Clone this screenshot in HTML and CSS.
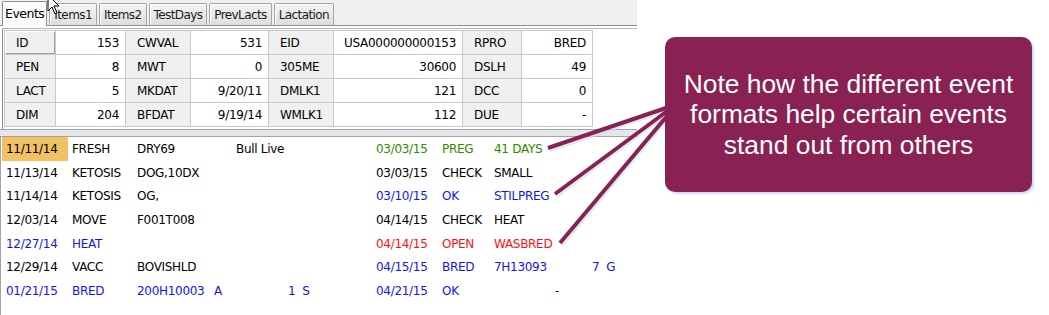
FILE: index.html
```html
<!DOCTYPE html>
<html lang="en">
<head>
    <meta charset="UTF-8">
    <title>Cow Events</title>
    <link rel="stylesheet" href="styles.css">
</head>
<body>
    <div class="app">
        <div class="tabs">
            <div class="tab active">Events</div>
            <div class="tab">Items1</div>
            <div class="tab">Items2</div>
            <div class="tab">TestDays</div>
            <div class="tab">PrevLacts</div>
            <div class="tab">Lactation</div>
        </div>

        <div class="summary">
            <table class="grid">
                <tr>
                    <td class="lbl sel">ID</td><td class="val">153</td>
                    <td class="lbl">CWVAL</td><td class="val">531</td>
                    <td class="lbl">EID</td><td class="val">USA000000000153</td>
                    <td class="lbl">RPRO</td><td class="val">BRED</td>
                </tr>
                <tr>
                    <td class="lbl">PEN</td><td class="val">8</td>
                    <td class="lbl">MWT</td><td class="val">0</td>
                    <td class="lbl">305ME</td><td class="val">30600</td>
                    <td class="lbl">DSLH</td><td class="val">49</td>
                </tr>
                <tr>
                    <td class="lbl">LACT</td><td class="val">5</td>
                    <td class="lbl">MKDAT</td><td class="val">9/20/11</td>
                    <td class="lbl">DMLK1</td><td class="val">121</td>
                    <td class="lbl">DCC</td><td class="val">0</td>
                </tr>
                <tr>
                    <td class="lbl">DIM</td><td class="val">204</td>
                    <td class="lbl">BFDAT</td><td class="val">9/19/14</td>
                    <td class="lbl">WMLK1</td><td class="val">112</td>
                    <td class="lbl">DUE</td><td class="val">-</td>
                </tr>
            </table>
        </div>

        <div class="splitter"></div>

        <div class="events">
            <div class="row">
                <span class="hl">11/11/14</span><span>FRESH</span><span>DRY69</span><span></span><span>Bull Live</span><span></span>
                <span class="green">03/03/15</span><span class="green">PREG</span><span class="green">41 DAYS</span><span></span><span></span>
            </div>
            <div class="row">
                <span>11/13/14</span><span>KETOSIS</span><span>DOG,10DX</span><span></span><span></span><span></span>
                <span>03/03/15</span><span>CHECK</span><span>SMALL</span><span></span><span></span>
            </div>
            <div class="row">
                <span>11/14/14</span><span>KETOSIS</span><span>OG,</span><span></span><span></span><span></span>
                <span class="blue">03/10/15</span><span class="blue">OK</span><span class="blue">STILPREG</span><span></span><span></span>
            </div>
            <div class="row">
                <span>12/03/14</span><span>MOVE</span><span>F001T008</span><span></span><span></span><span></span>
                <span>04/14/15</span><span>CHECK</span><span>HEAT</span><span></span><span></span>
            </div>
            <div class="row">
                <span class="blue">12/27/14</span><span class="blue">HEAT</span><span></span><span></span><span></span><span></span>
                <span class="red">04/14/15</span><span class="red">OPEN</span><span class="red">WASBRED</span><span></span><span></span>
            </div>
            <div class="row">
                <span>12/29/14</span><span>VACC</span><span>BOVISHLD</span><span></span><span></span><span></span>
                <span class="blue">04/15/15</span><span class="blue">BRED</span><span class="blue">7H13093</span><span></span><span class="blue">7&nbsp; G</span>
            </div>
            <div class="row">
                <span class="blue">01/21/15</span><span class="blue">BRED</span><span class="blue">200H10003</span><span class="blue">A</span><span></span><span class="blue">1&nbsp; S</span>
                <span class="blue">04/21/15</span><span class="blue">OK</span><span></span><span class="dark">-</span><span></span>
            </div>
        </div>
    </div>

    <!-- callout pointers drawn over the event list -->
    <svg class="pointers" width="1049" height="315" viewBox="0 0 1049 315">
        <g stroke="#c9e3f5" stroke-width="2" opacity="0.7">
            <line x1="667" y1="111" x2="550" y2="151" />
            <line x1="667" y1="115" x2="557" y2="197" />
            <line x1="668" y1="119" x2="562" y2="246" />
        </g>
        <g stroke="#892152" stroke-width="4">
            <line x1="666" y1="108" x2="548" y2="148" />
            <line x1="666" y1="112" x2="555" y2="194" />
            <line x1="667" y1="116" x2="560" y2="243" />
        </g>
    </svg>

    <div class="callout">
        <p>Note how the different event formats help certain events stand out from others</p>
    </div>

    <svg class="cursor" width="14" height="22" viewBox="0 0 14 22">
        <path d="M1 1 L1 17 L5 13 L8 20 L10 19 L7 12 L12 12 Z" fill="#fff" stroke="#000" stroke-width="1" stroke-linejoin="miter" />
    </svg>
</body>
</html>
```

FILE: styles.css
```css
:root {
    --ui-font: "DejaVu Sans", Verdana, sans-serif;
    --panel-bg: #f0f0f0;
    --cell-border: #c9c9c9;
    --callout: #892152;
    --ev-blue: #1414f0;
    --ev-green: #2f8a00;
    --ev-red: #ff1010;
}

* {
    margin: 0;
    padding: 0;
    box-sizing: border-box;
}

body {
    position: relative;
    width: 1049px;
    height: 315px;
    overflow: hidden;
    background: #fff;
    font-family: var(--ui-font);
    font-size: 12px;
    letter-spacing: -0.3px;
    color: #000;
}

.app {
    width: 637px;
    height: 315px;
    display: flex;
    flex-direction: column;
}

/* tab strip */
.tabs {
    height: 26px;
    display: flex;
    align-items: flex-end;
    gap: 2px;
    padding-left: 2px;
    background: var(--panel-bg);
    border-bottom: 1px solid #8d8d8d;
    margin-bottom: 2px;
}

.tab {
    height: 22px;
    padding: 0 4px;
    display: flex;
    align-items: center;
    font-size: 12px;
    letter-spacing: -0.6px;
    color: #1a1a1a;
    background: linear-gradient(#f4f4f4, #dedede);
    border: 1px solid #a4a4a4;
    border-bottom: none;
    border-radius: 2px 2px 0 0;
    box-shadow: inset 1px 1px 0 #fff;
}

.tab.active {
    height: 25px;
    margin-bottom: -1px;
    padding: 0 2px 2px 2px;
    font-size: 12.5px;
    letter-spacing: -0.5px;
    background: #fbfbfb;
    border-color: #8d8d8d;
    box-shadow: none;
    color: #000;
}

/* summary grid */
.summary {
    height: 101px;
    margin-left: 2px;
    padding: 1px 0 0 1px;
    border-top: 1px solid #a8bbd0;
    border-left: 1px solid #8d8d8d;
}

.grid {
    width: 588px;
    border-collapse: collapse;
    table-layout: fixed;
}

.grid td {
    height: 24px;
    border: 1px solid var(--cell-border);
    white-space: nowrap;
    overflow: hidden;
}

.grid td.lbl {
    background: var(--panel-bg);
    padding-left: 11px;
}

.grid td.val {
    background: #fff;
    text-align: right;
    padding-right: 6px;
}

.grid td.sel {
    box-shadow: inset 1px 1px 0 #fff, inset -1px -1px 0 #a0a0a0;
}

.grid td:nth-child(1) { width: 51px; }
.grid td:nth-child(2) { width: 70px; }
.grid td:nth-child(3) { width: 65px; }
.grid td:nth-child(4) { width: 78px; }
.grid td:nth-child(5) { width: 65px; }
.grid td:nth-child(6) { width: 129px; }
.grid td:nth-child(7) { width: 59px; }
.grid td:nth-child(8) { width: 71px; }

.splitter {
    height: 8px;
    border-top: 1px solid #8ea7c2;
    border-bottom: 1px solid #a3a3a3;
    background: #e6e6e6;
}

/* event list */
.events {
    flex: 1;
    background: #fff;
    border-left: 1px solid #a3a3a3;
    padding-left: 1px;
}

.row {
    height: 23.7px;
    display: grid;
    grid-template-columns: 66px 65px 77px 22px 52px 88px 66px 52px 61px 37px 1fr;
    align-items: stretch;
}

.row span {
    display: flex;
    align-items: center;
    padding-left: 4px;
    white-space: nowrap;
}

.row .hl {
    background: #f2c262;
}

.blue { color: var(--ev-blue); }
.green { color: var(--ev-green); }
.red { color: var(--ev-red); }
.dark { color: #101050; }

/* overlay annotation */
.pointers {
    position: absolute;
    left: 0;
    top: 0;
    pointer-events: none;
}

.callout {
    position: absolute;
    left: 665px;
    top: 37px;
    width: 367px;
    height: 155px;
    display: flex;
    align-items: center;
    justify-content: center;
    background: var(--callout);
    border-radius: 10px;
    box-shadow: 2px 2px 2px rgba(170, 210, 240, 0.7);
}

.callout p {
    font-family: "Liberation Sans", Arial, sans-serif;
    font-size: 26.4px;
    line-height: 30.5px;
    letter-spacing: 0;
    color: #fff;
    text-align: center;
    width: 100%;
    padding: 0 10px;
}

.cursor {
    position: absolute;
    left: 47px;
    top: -6px;
}
```
